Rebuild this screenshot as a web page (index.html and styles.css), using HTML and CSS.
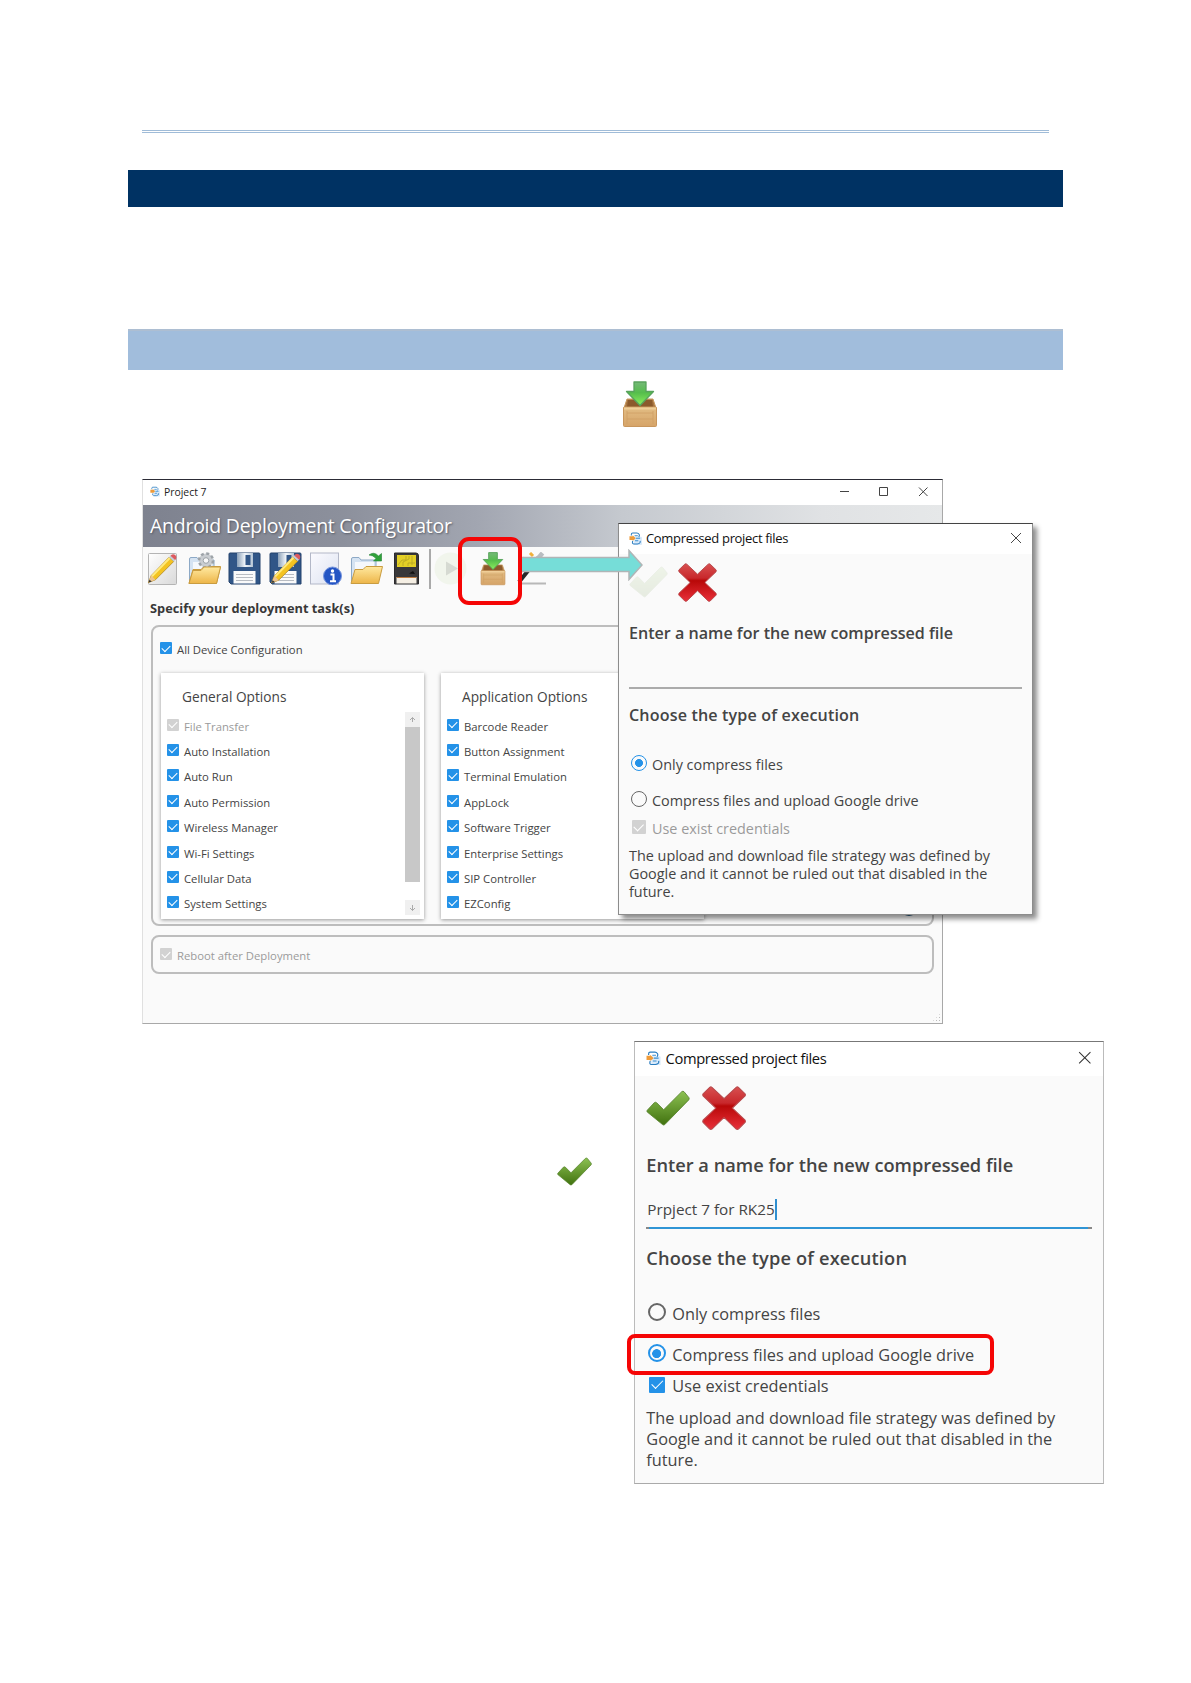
FILE: index.html
```html
<!DOCTYPE html>
<html lang="en">
<head>
    <meta charset="UTF-8">
    <meta name="viewport" content="width=device-width, initial-scale=1.0">
    <title>Compressed project files</title>
    <link rel="stylesheet" href="styles.css">
</head>
<body>
    <!-- shared icons -->
    <svg class="defs" width="0" height="0">
        <defs>
            <linearGradient id="gGreen" x1="0" y1="0" x2="0" y2="1"><stop offset="0" stop-color="#8cc152"/><stop offset="1" stop-color="#41720f"/></linearGradient>
            <linearGradient id="gRed" x1="0" y1="0" x2="0" y2="1"><stop offset="0" stop-color="#d85050"/><stop offset=".38" stop-color="#c8282c"/><stop offset=".45" stop-color="#b80808"/><stop offset="1" stop-color="#e8303a"/></linearGradient>
            <linearGradient id="gArrow" x1="0" y1="0" x2="0" y2="1"><stop offset="0" stop-color="#75b978"/><stop offset=".45" stop-color="#55bd4c"/><stop offset="1" stop-color="#8cf05c"/></linearGradient>
            <linearGradient id="gWood" x1="0" y1="0" x2="0" y2="1"><stop offset="0" stop-color="#e2bd84"/><stop offset="1" stop-color="#d6a468"/></linearGradient>
            <linearGradient id="gFolder" x1="0" y1="0" x2="0" y2="1"><stop offset="0" stop-color="#ffe9a0"/><stop offset="1" stop-color="#edb548"/></linearGradient>
            <linearGradient id="gPaper" x1="0" y1="0" x2="1" y2="1"><stop offset="0" stop-color="#ffffff"/><stop offset="1" stop-color="#d9d9d9"/></linearGradient>
            <linearGradient id="gSheet" x1="0" y1="0" x2="1" y2="1"><stop offset="0" stop-color="#fbfbff"/><stop offset="1" stop-color="#dde2f0"/></linearGradient>
            <linearGradient id="gMetal" x1="0" y1="0" x2="1" y2="0"><stop offset="0" stop-color="#8aa0b8"/><stop offset=".5" stop-color="#f2f6fa"/><stop offset="1" stop-color="#b4c4d4"/></linearGradient>
        </defs>
        <symbol id="check" viewBox="0 0 40 33">
            <path d="M1 18.5 L7.5 11.5 Q8.5 10.8 9.5 11.5 L16 18 L32.5 1.5 Q33.5 .8 34.5 1.5 L39 7 Q39.6 8 38.8 9 L17 31.5 Q16 32.3 15 31.5 L1 20 Q.4 19.2 1 18.5Z" fill="url(#gGreen)" stroke="#58842f" stroke-width=".8"/>
        </symbol>
        <symbol id="cross" viewBox="0 0 40 40">
            <path d="M7 1.2 Q8 .4 9 1.2 L20 11.5 L31 1.2 Q32 .4 33 1.2 L39 7 Q39.6 8 39 9 L27.5 20 L39 31 Q39.6 32 39 33 L33 39 Q32 39.6 31 39 L20 28.5 L9 39 Q8 39.6 7 39 L1 33 Q.4 32 1 31 L12.5 20 L1 9 Q.4 8 1 7Z" fill="url(#gRed)" stroke="#b8494c" stroke-width="1"/>
        </symbol>
        <symbol id="crate" viewBox="0 0 36 48">
            <path d="M5 19 H31 L34 28 H2Z" fill="#a87642" stroke="#c99a60"/>
            <path d="M6 20 H30 L31 27 H5Z" fill="#8b5a2c"/>
            <rect x="1.5" y="27" width="33" height="19.5" rx="1" fill="url(#gWood)" stroke="#c8965c"/>
            <path d="M2 28.5 H34" stroke="#f0cf98" stroke-width="2"/>
            <path d="M5 33 H31 M5 39 H31 M5 31 V44 M31 31 V44" stroke="#cfa064" stroke-width=".8"/>
            <path d="M12 2 H24 V11.5 H31.5 L18 25.5 L4.500 11.5 H12Z" fill="url(#gArrow)" stroke="#58a35c" stroke-width="1.3" stroke-linejoin="round"/>
        </symbol>
        <symbol id="app" viewBox="0 0 14 14">
            <rect x="5" y="5" width="9" height="9" rx="1" fill="#d9eafa"/>
            <path d="M2.5 3.8 V2.6 Q2.5 1 4 1 H8.5 Q10 1 11 2.6 Q11.6 4 10.5 5.5 M4 9.5 Q3 12.8 5 12.8 H9 Q12.7 12.5 12 9.5" fill="none" stroke="#2a7dc0" stroke-width="1.1"/>
            <path d="M6 4 H9.5 M7.5 6.8 H12 M6.5 9.5 H10" stroke="#3b8fd0" stroke-width="1.1"/>
            <path d="M.5 4.6 H4 V3.6 L7.3 6.8 L4 9.6 V8.6 H.5Z" fill="#ee9b3a"/>
        </symbol>
        <symbol id="pencil" viewBox="0 0 33 33">
            <path d="M1.5 31.500 L4.500 24 L23.500 4.500 L28.500 9 L9 28.500Z" fill="#f3c322" stroke="#ab8325" stroke-width=".8"/>
            <path d="M4.500 24 L23.500 4.500 L25 6 L6 25.500Z" fill="#ffe97c"/>
            <path d="M1.500 31.500 L4.500 24 L9 28.500Z" fill="#ecc490"/>
            <path d="M1.500 31.500 L2.700 28.500 L5 30.300Z" fill="#333"/>
            <path d="M23.500 4.500 L25.500 2.500 L30.500 7 L28.500 9Z" fill="#c4ccd4"/>
            <path d="M25 3 Q27 0 30 2 Q32.500 4.500 30 7.500Z" fill="#dd5a5f"/>
        </symbol>
        <symbol id="floppy" viewBox="0 0 33 33">
            <path d="M1 2 Q1 1 2 1 H31 Q32 1 32 2 V32 H3 L1 30Z" fill="#315687" stroke="#25436d"/>
            <rect x="9" y="1" width="16" height="14" fill="url(#gMetal)"/>
            <rect x="17.5" y="3" width="5" height="10" fill="#315687"/>
            <rect x="5.5" y="19" width="22" height="12.5" fill="#fafafa"/>
            <path d="M8 22.5 H25 M8 25.5 H25 M8 28.5 H25" stroke="#b8bcc2"/>
        </symbol>
        <symbol id="folder" viewBox="0 0 33 33">
            <path d="M1.5 29 V7 Q1.5 5.5 3 5.5 H9 L11 8 H26 V29Z" fill="#d5e3f2" stroke="#8da9c6"/>
            <path d="M5 10 H24 V18 H5Z" fill="#f5f8fc"/>
            <path d="M1 31.5 L5 17.5 H13 L16 14.5 H32.5 L28.5 31.5Z" fill="url(#gFolder)" stroke="#c99c40"/>
        </symbol>
    </svg>

    <div class="page">
        <div class="rule"></div>
        <div class="bar bar-dark"></div>
        <div class="bar bar-light"></div>
        <svg class="note-icon crate-note"><use href="#crate"/></svg>
        <svg class="note-icon check-note"><use href="#check"/></svg>

        <div class="window">
            <div class="window-title">
                <svg class="app-icon"><use href="#app"/></svg>
                <span>Project 7</span>
                <svg class="window-buttons" viewBox="0 0 90 12">
                    <path d="M0 5.5 H9 M39.5 1.5 H47.5 V9.5 H39.5Z M79 1.5 L87.5 10 M87.5 1.5 L79 10" fill="none" stroke="#444"/>
                </svg>
            </div>
            <div class="banner">Android Deployment Configurator</div>
            <div class="toolbar">
                <svg class="tool" viewBox="0 0 33 33">
                    <rect x="1.5" y="1.5" width="28" height="31" rx="1" fill="url(#gPaper)" stroke="#b4b4b4"/>
                    <use href="#pencil" width="31" height="33"/>
                </svg>
                <svg class="tool" viewBox="0 0 33 33">
                    <use href="#folder" width="33" height="33"/>
                    <circle cx="18" cy="8.5" r="7" fill="#c9cdd1" stroke="#9da3a8" stroke-width="2.5" stroke-dasharray="3 2.5"/>
                    <circle cx="18" cy="8.5" r="2.8" fill="#f8f8f8" stroke="#9da3a8"/>
                    <path d="M1 31.5 L5 18.5 H13 L16 15 H32.5 L28.5 31.5Z" fill="url(#gFolder)" stroke="#c99c40"/>
                </svg>
                <svg class="tool"><use href="#floppy"/></svg>
                <svg class="tool" viewBox="0 0 33 33">
                    <use href="#floppy" width="33" height="33"/>
                    <use href="#pencil" x="1" width="32" height="33"/>
                </svg>
                <svg class="tool" viewBox="0 0 33 33">
                    <rect x="1.5" y="1" width="28" height="31" fill="url(#gSheet)" stroke="#b3b8c8"/>
                    <circle cx="23.5" cy="24" r="9" fill="#2455c4" stroke="#7896dd"/>
                    <circle cx="23.5" cy="19" r="1.7" fill="#fff"/>
                    <path d="M21.5 22.5 H24.5 V29 M21 29.2 H27" fill="none" stroke="#fff" stroke-width="2"/>
                </svg>
                <svg class="tool" viewBox="0 0 33 33">
                    <use href="#folder" width="33" height="33"/>
                    <path d="M19 3 Q24 -1 28.5 4 L31.5 1.5 V9 H23.5 L26 6.5 Q23 3 19 3Z" fill="#30a23a" stroke="#208030" stroke-width=".6"/>
                </svg>
                <svg class="tool" viewBox="0 0 33 33">
                    <path d="M4.5 1 H26 Q28.5 1 28.5 4 V32 H4.5Z" fill="#39383a" stroke="#2b2a2c"/>
                    <rect x="7" y="3" width="19" height="12" fill="#e4d026"/>
                    <path d="M8 13 L12 8 H16 V4 M13 14 V10 L19 7 V4 M18 14 V11 H25 M22 4 V13" fill="none" stroke="#b5a524" stroke-width=".8"/>
                    <path d="M19 21.5 L23 19 L25 22Z" fill="#111"/>
                    <rect x="6.5" y="25" width="20" height="6.5" fill="#f5efe4"/>
                    <path d="M6.5 25.5 H26.5" stroke="#bd7a3f"/>
                </svg>
                <span class="tool-divider"></span>
                <svg class="tool play" viewBox="0 0 33 33">
                    <circle cx="16.5" cy="16.5" r="16" fill="#f1f5ec"/>
                    <path d="M12 9.5 L24 16.5 L12 23.5Z" fill="#d6dad2"/>
                </svg>
                <svg class="tool crate"><use href="#crate"/></svg>
                <svg class="tool wand" viewBox="0 0 33 33">
                    <path d="M7 31.5 H31" stroke="#b8b8b8" stroke-width="2"/>
                    <path d="M4 30 L24 5" stroke="#26282a" stroke-width="4"/>
                    <path d="M20.500 9.500 L27.500 1" stroke="#b9bdc1" stroke-width="4.5"/>
                    <path d="M8 6 l3 1.5 M15 1 l3 3 M26 12 l3 2" stroke="#f0b03a" stroke-width="3"/>
                </svg>
            </div>
            <h1 class="task-title">Specify your deployment task(s)</h1>
            <div class="group group-main">
                <label class="option all"><i class="box"></i>All Device Configuration</label>
                <div class="panels">
                    <div class="panel">
                        <h2>General Options</h2>
                        <label class="option disabled"><i class="box"></i>File Transfer</label>
                        <label class="option"><i class="box"></i>Auto Installation</label>
                        <label class="option"><i class="box"></i>Auto Run</label>
                        <label class="option"><i class="box"></i>Auto Permission</label>
                        <label class="option"><i class="box"></i>Wireless Manager</label>
                        <label class="option"><i class="box"></i>Wi-Fi Settings</label>
                        <label class="option"><i class="box"></i>Cellular Data</label>
                        <label class="option"><i class="box"></i>System Settings</label>
                        <div class="scrollbar">
                            <svg viewBox="0 0 15 15"><path d="M5 8 L7.5 5.5 L10 8 M7.5 5.5 V10" fill="none" stroke="#aaa"/></svg>
                            <span class="thumb"></span>
                            <svg viewBox="0 0 15 15"><path d="M5 8 L7.5 10.5 L10 8 M7.5 10.5 V5" fill="none" stroke="#aaa"/></svg>
                        </div>
                    </div>
                    <div class="panel">
                        <h2>Application Options</h2>
                        <label class="option"><i class="box"></i>Barcode Reader</label>
                        <label class="option"><i class="box"></i>Button Assignment</label>
                        <label class="option"><i class="box"></i>Terminal Emulation</label>
                        <label class="option"><i class="box"></i>AppLock</label>
                        <label class="option"><i class="box"></i>Software Trigger</label>
                        <label class="option"><i class="box"></i>Enterprise Settings</label>
                        <label class="option"><i class="box"></i>SIP Controller</label>
                        <label class="option"><i class="box"></i>EZConfig</label>
                    </div>
                </div>
                <span class="help-dot"></span>
            </div>
            <div class="group group-reboot">
                <label class="option disabled"><i class="box"></i>Reboot after Deployment</label>
            </div>
            <span class="grip"></span>
        </div>

        <div class="dialog dialog-first">
            <div class="dialog-title">
                <svg class="app-icon"><use href="#app"/></svg>
                <span>Compressed project files</span>
                <svg class="close" viewBox="0 0 12 12"><path d="M1 1 L11 11 M11 1 L1 11" stroke="#333" stroke-width=".9"/></svg>
            </div>
            <div class="dialog-body">
                <div class="actions">
                    <svg class="check faded"><use href="#check"/></svg>
                    <svg class="cross"><use href="#cross"/></svg>
                </div>
                <h2>Enter a name for the new compressed file</h2>
                <div class="field"></div>
                <h2 class="type-title">Choose the type of execution</h2>
                <label class="choice only"><i class="radio on"></i>Only compress files</label>
                <label class="choice upload"><i class="radio"></i>Compress files and upload Google drive</label>
                <label class="choice exist disabled"><i class="box"></i>Use exist credentials</label>
                <p>The upload and download file strategy was defined by<br>Google and it cannot be ruled out that disabled in the<br>future.</p>
            </div>
        </div>

        <div class="dialog dialog-second">
            <div class="dialog-title">
                <svg class="app-icon"><use href="#app"/></svg>
                <span>Compressed project files</span>
                <svg class="close" viewBox="0 0 12 12"><path d="M1 1 L11 11 M11 1 L1 11" stroke="#333" stroke-width=".9"/></svg>
            </div>
            <div class="dialog-body">
                <div class="actions">
                    <svg class="check"><use href="#check"/></svg>
                    <svg class="cross"><use href="#cross"/></svg>
                </div>
                <h2>Enter a name for the new compressed file</h2>
                <div class="field focused"><span>Prpject 7 for RK25</span><i class="caret"></i></div>
                <h2 class="type-title">Choose the type of execution</h2>
                <label class="choice only"><i class="radio"></i>Only compress files</label>
                <label class="choice upload"><i class="radio on"></i>Compress files and upload Google drive</label>
                <label class="choice exist"><i class="box"></i>Use exist credentials</label>
                <p>The upload and download file strategy was defined by<br>Google and it cannot be ruled out that disabled in the<br>future.</p>
            </div>
        </div>

        <!-- callouts -->
        <svg class="arrow" viewBox="0 0 124 32">
            <path d="M1 8.5 H110 V1.5 L123 16 L110 30.5 V22.5 H1Z" fill="#76ddd8" stroke="#b0b5b6" stroke-width="1.5"/>
        </svg>
        <span class="mark mark-crate"></span>
        <span class="mark mark-upload"></span>
    </div>
</body>
</html>
```
FILE: styles.css
```css
* {
    box-sizing: border-box;
}

body {
    margin: 0;
    background-color: #ffffff;
    color: #444444;
    font-family: "Open Sans", "Noto Sans", sans-serif;
}

svg {
    display: block;
    flex: none;
}

.defs {
    position: absolute;
}

.page {
    position: relative;
    width: 1191px;
    height: 1683px;
    padding: 130px 128px 0;
    overflow: hidden;
}

.rule {
    height: 3px;
    margin: 0 14px 37px;
    border: 1px solid #a0bcd8;
    border-width: 1px 0;
}

.bar-dark {
    height: 37px;
    background-color: #003263;
}

.bar-light {
    height: 41px;
    margin-top: 122px;
    background-color: #a1bddc;
    border-top: 2px solid #adbed2;
}

.note-icon {
    position: absolute;
}

.crate-note {
    left: 622px;
    top: 380px;
    width: 36px;
    height: 48px;
}

.check-note {
    left: 556px;
    top: 1157px;
    width: 37px;
    height: 29px;
}

/* main window */
.window {
    position: absolute;
    left: 142px;
    top: 479px;
    width: 801px;
    height: 545px;
    background-color: #fafafa;
    border: 1px solid #a8a8a8;
    border-top-color: #2c2c36;
    border-left-color: #e0e0e0;
}

.window-title {
    display: flex;
    align-items: center;
    height: 25px;
    padding: 0 13px 2px 7px;
    background-color: #ffffff;
    font-size: 10.4px;
    gap: 4px;
    color: #222;
}

.window-title .app-icon {
    width: 10px;
    height: 11px;
}

.window-buttons {
    width: 90px;
    height: 12px;
    margin-left: auto;
    margin-right: -1px;
}

.banner {
    height: 42px;
    padding-left: 7px;
    line-height: 41px;
    font-size: 19.5px;
    letter-spacing: -0.26px;
    color: #ffffff;
    text-shadow: 1px 1px 2px #555a66;
    background: linear-gradient(90deg, #7e828f 0%, #8c909c 25%, #a2a6b1 42%, #c5c9cf 60%, #e0e2e4 85%, #e6e8e9 100%);
}

.toolbar {
    display: flex;
    align-items: center;
    height: 43px;
    padding-left: 4px;
    gap: 7.5px;
}

.tool {
    width: 33px;
    height: 33px;
}

.tool-divider {
    width: 2px;
    height: 40px;
    margin-left: -2px;
    background-color: #a9a9a9;
}

.tool.play {
    margin-left: -4px;
}

.tool.crate {
    width: 26px;
    height: 35px;
    margin-left: 5px;
}

.tool.wand {
    margin-left: 2px;
}

.task-title {
    margin: 7px 0 0 7px;
    font-size: 12.8px;
    line-height: 22px;
    font-weight: 700;
    color: #383838;
}

.group {
    position: relative;
    margin: 0 8px;
    border: 2px solid #bdbdbd;
    border-radius: 8px;
}

.group-main {
    height: 301px;
    margin-top: 6px;
    padding: 10px 7px 0;
}

.option {
    display: flex;
    align-items: center;
    height: 25.4px;
    font-size: 11.3px;
    white-space: nowrap;
}

.box {
    position: relative;
    flex: none;
    width: 12px;
    height: 12px;
    margin-right: 5px;
    border-radius: 1px;
    background-color: #2492e8;
}

.option .box {
    top: -1.5px;
}

.box::after {
    content: "";
    position: absolute;
    left: 20%;
    top: 20%;
    width: 60%;
    height: 34%;
    border: solid #ffffff;
    border-width: 0 0 1.4px 1.4px;
    transform: rotate(-45deg);
}

.disabled {
    color: #9a9a9a;
}

.disabled .box {
    background-color: #d2d2d2;
}

.panels {
    display: flex;
    gap: 17px;
    margin: 11px 0 0 1px;
}

.panel {
    position: relative;
    width: 263px;
    height: 246px;
    padding: 14px 6px 0;
    background-color: #ffffff;
    box-shadow: 0 1px 4px rgba(0, 0, 0, 0.4);
}

.panel h2 {
    height: 24px;
    margin: 0 0 2px 15px;
    font-size: 13.7px;
    line-height: 20px;
    font-weight: 400;
}

.scrollbar {
    position: absolute;
    right: 4px;
    top: 39px;
    width: 15px;
    height: 203px;
    display: flex;
    flex-direction: column;
    justify-content: space-between;
}

.scrollbar svg {
    width: 15px;
    height: 15px;
    background-color: #f0f0f0;
}

.thumb {
    height: 155px;
    margin-bottom: 18px;
    background-color: #c8c8c8;
}

.help-dot {
    position: absolute;
    right: 14px;
    bottom: 8px;
    width: 18px;
    height: 18px;
    border-radius: 50%;
    background-color: #245578;
}

.group-reboot {
    height: 39px;
    margin-top: 9px;
    padding: 6px 7px;
}

.grip {
    position: absolute;
    right: 1px;
    bottom: 1px;
    width: 9px;
    height: 9px;
    background: radial-gradient(#bbb 35%, transparent 40%) 0 0 / 3px 3px;
    clip-path: polygon(100% 0, 100% 100%, 0 100%);
}

/* dialogs, --u is the zoom of the dialog */
.dialog {
    --u: 1px;
    position: absolute;
    width: calc(var(--u) * 415);
    height: calc(var(--u) * 391.5);
    background-color: #fafafa;
    border: 1px solid #8c8c8c;
}

.dialog-first {
    left: 618px;
    top: 523px;
    border-top-color: #444;
    box-shadow: 4px 4px 5px rgba(0, 0, 0, 0.45);
}

.dialog-second {
    --u: 1.1325px;
    left: 634px;
    top: 1041px;
    border-color: #777 #bbb #aaa;
}

.dialog-title {
    display: flex;
    align-items: center;
    height: calc(var(--u) * 30);
    padding: 0 calc(var(--u) * 10) calc(var(--u) * 2);
    background-color: #ffffff;
    font-size: calc(var(--u) * 13);
    letter-spacing: calc(var(--u) * -0.33);
    color: #111;
}

.dialog-title .app-icon {
    width: calc(var(--u) * 13);
    height: calc(var(--u) * 13);
    margin-right: calc(var(--u) * 4);
}

.close {
    width: calc(var(--u) * 12);
    height: calc(var(--u) * 12);
    margin-left: auto;
}

.dialog-body {
    padding: calc(var(--u) * 8) calc(var(--u) * 10) 0;
}

.actions {
    display: flex;
    align-items: center;
    gap: calc(var(--u) * 10);
    height: calc(var(--u) * 40);
}

.check {
    width: calc(var(--u) * 39);
    height: calc(var(--u) * 32);
}

.cross {
    width: calc(var(--u) * 39);
    height: calc(var(--u) * 39);
}

.faded {
    opacity: 0.1;
}

.dialog h2 {
    margin: calc(var(--u) * 19) 0 0;
    font-size: calc(var(--u) * 16.1);
    line-height: calc(var(--u) * 24);
    font-weight: 600;
    white-space: nowrap;
}

.field {
    display: flex;
    align-items: center;
    height: calc(var(--u) * 44);
    padding: calc(var(--u) * 11) 0 0 1px;
    border-bottom: 2px solid #ababab;
    font-size: calc(var(--u) * 13.5);
}

.field.focused {
    border-bottom: 2px solid;
    border-image: linear-gradient(90deg, #888 1.2%, #2f95d5 1.2%, #2f95d5 98.7%, #888 98.7%) 2;
}

.caret {
    width: 2px;
    height: 21px;
    background-color: #2f8fd0;
}

.dialog .type-title {
    margin-top: calc(var(--u) * 14);
    letter-spacing: calc(var(--u) * 0.15);
}

.choice {
    display: flex;
    align-items: center;
    height: calc(var(--u) * 24);
    font-size: calc(var(--u) * 14.4);
    white-space: nowrap;
}

.only {
    margin-top: calc(var(--u) * 25);
}

.upload {
    margin-top: calc(var(--u) * 12);
}

.exist {
    margin-top: calc(var(--u) * 4);
}

.radio {
    position: relative;
    top: calc(var(--u) * -1.2);
    width: calc(var(--u) * 16);
    height: calc(var(--u) * 16);
    margin: 0 calc(var(--u) * 5.5) 0 calc(var(--u) * 1.5);
    border: calc(var(--u) * 1.8) solid #666;
    border-radius: 50%;
}

.radio.on {
    border-color: #2492e8;
    background: radial-gradient(#2492e8 52%, transparent 60%) center / calc(var(--u) * 10) calc(var(--u) * 10) no-repeat;
}

.choice .box {
    top: calc(var(--u) * -1);
    width: calc(var(--u) * 14);
    height: calc(var(--u) * 14);
    margin: 0 calc(var(--u) * 6.5) 0 calc(var(--u) * 2.5);
}

.dialog p {
    margin: calc(var(--u) * 6.5) 0 0;
    font-size: calc(var(--u) * 14.4);
    line-height: calc(var(--u) * 18.2);
    white-space: nowrap;
}

.dialog-second p {
    margin-top: calc(var(--u) * 7.5);
}

/* callouts */
.arrow {
    position: absolute;
    left: 519px;
    top: 549px;
    width: 124px;
    height: 32px;
}

.mark {
    position: absolute;
    border: 4px solid #f50505;
}

.mark-crate {
    left: 458px;
    top: 537px;
    width: 64px;
    height: 68px;
    border-radius: 11px;
}

.mark-upload {
    left: 627px;
    top: 1334px;
    width: 367px;
    height: 41px;
    border-radius: 8px;
}
```
